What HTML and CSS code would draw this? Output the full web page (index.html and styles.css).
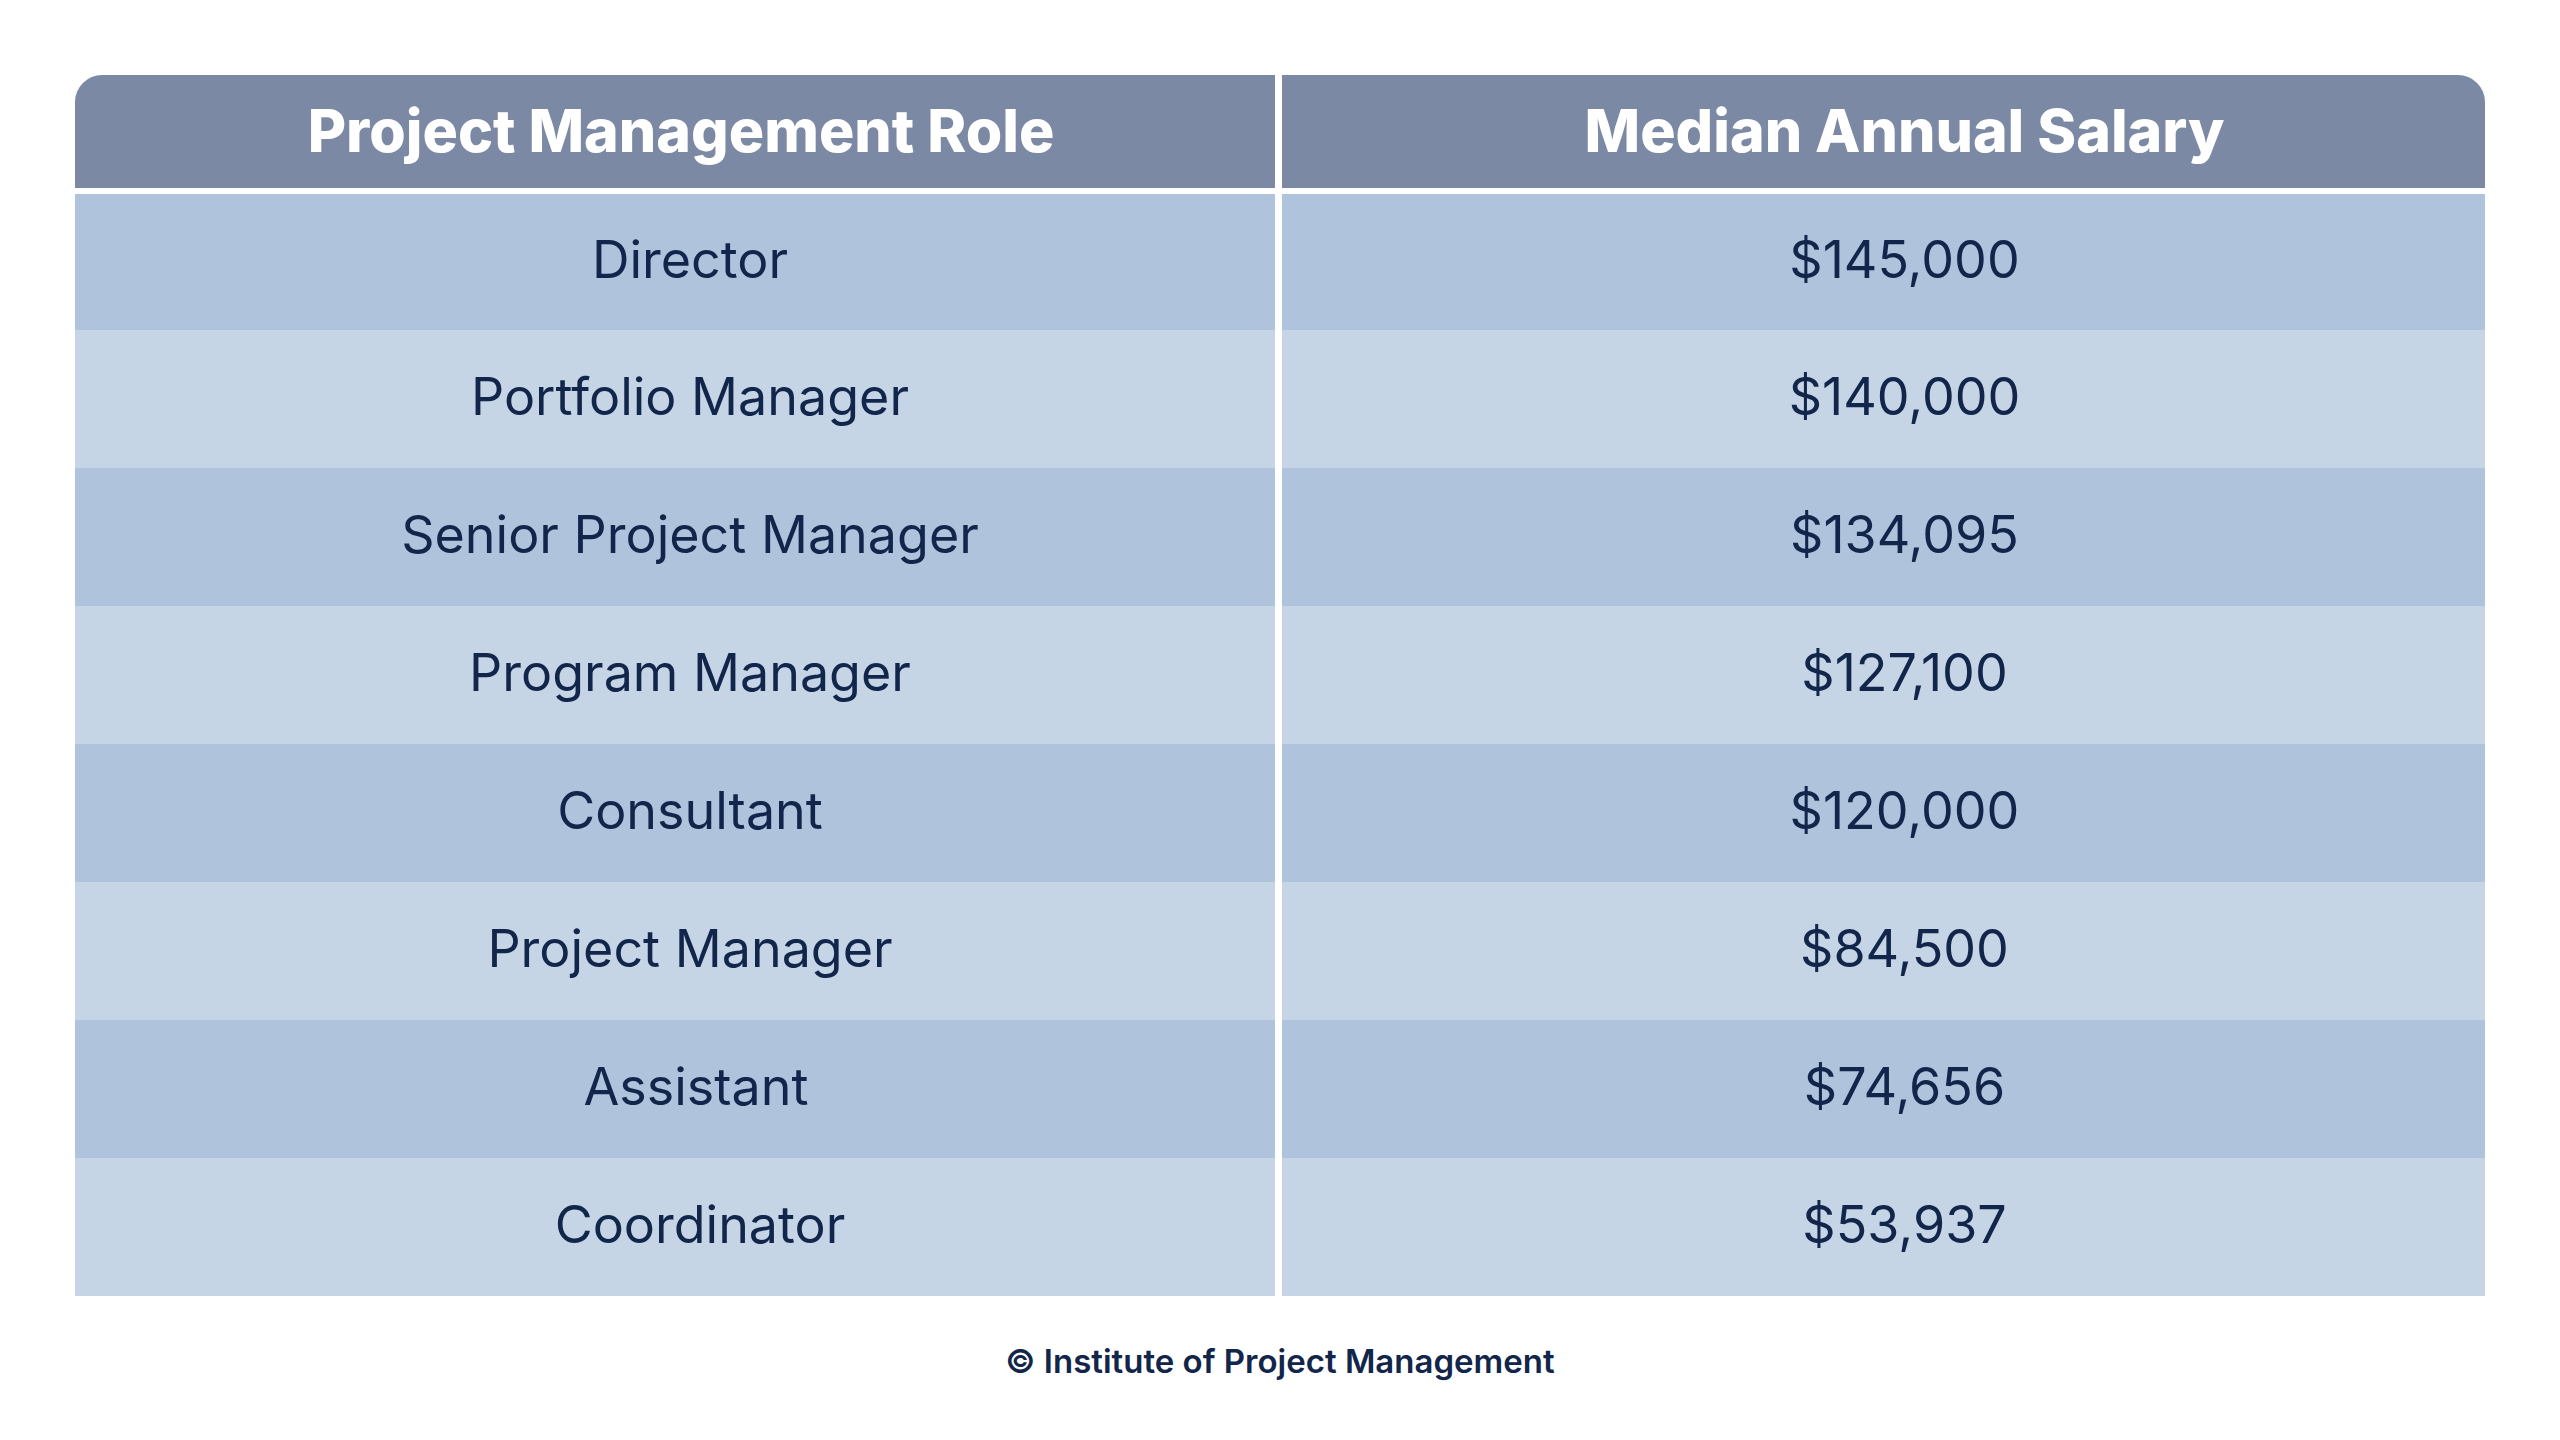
FILE: index.html
```html
<!DOCTYPE html>
<html lang="en">
<head>
<meta charset="utf-8">
<title>Project Management Salaries</title>
<link rel="stylesheet" href="styles.css">
</head>
<body>
<main class="page">
  <section class="table">
    <div class="thead">
      <div class="th th-left"><span class="cell-text head-role">Project Management Role</span></div>
      <div class="th th-right"><span class="cell-text salary">Median Annual Salary</span></div>
    </div>
    <div class="tbody">
      <div class="tr dark"><div class="td"><span class="cell-text role">Director</span></div><div class="td"><span class="cell-text salary">$145,000</span></div></div>
      <div class="tr light"><div class="td"><span class="cell-text role">Portfolio Manager</span></div><div class="td"><span class="cell-text salary">$140,000</span></div></div>
      <div class="tr dark"><div class="td"><span class="cell-text role">Senior Project Manager</span></div><div class="td"><span class="cell-text salary">$134,095</span></div></div>
      <div class="tr light"><div class="td"><span class="cell-text role">Program Manager</span></div><div class="td"><span class="cell-text salary">$127,100</span></div></div>
      <div class="tr dark"><div class="td"><span class="cell-text role">Consultant</span></div><div class="td"><span class="cell-text salary">$120,000</span></div></div>
      <div class="tr light"><div class="td"><span class="cell-text role">Project Manager</span></div><div class="td"><span class="cell-text salary">$84,500</span></div></div>
      <div class="tr dark"><div class="td"><span class="cell-text role shifted">Assistant</span></div><div class="td"><span class="cell-text salary">$74,656</span></div></div>
      <div class="tr light"><div class="td"><span class="cell-text role shifted-more">Coordinator</span></div><div class="td"><span class="cell-text salary">$53,937</span></div></div>
    </div>
  </section>
  <footer class="credit">© Institute of Project Management</footer>
</main>
</body>
</html>
```

FILE: styles.css
```css
html, body {
  margin: 0;
  padding: 0;
  background: #ffffff;
}

body {
  width: 2560px;
  height: 1440px;
  font-family: "Inter", "Liberation Sans", sans-serif;
  color: #12254a;
}

.page {
  padding: 75px 75px 0 75px;
  display: flex;
  flex-direction: column;
  align-items: center;
}

.table {
  width: 2410px;
  display: flex;
  flex-direction: column;
  gap: 6px;
}

.thead,
.tr {
  display: grid;
  grid-template-columns: 1200px 1203px;
  column-gap: 7px;
}

.th {
  height: 113px;
  background: #7b89a4;
  color: #ffffff;
  font-weight: 800;
  font-size: 59px;
  display: flex;
  align-items: center;
  justify-content: center;
  padding-bottom: 2px;
  box-sizing: border-box;
}

.th-left {
  border-top-left-radius: 27px;
}

.th-right {
  border-top-right-radius: 27px;
}

.tbody {
  display: flex;
  flex-direction: column;
}

.tr {
  height: 138px;
}

.tr:first-child {
  height: 136px;
}

.td {
  display: flex;
  align-items: center;
  justify-content: center;
  font-size: 52px;
  font-weight: 400;
  padding-bottom: 5px;
  box-sizing: border-box;
}

.tr.dark .td {
  background: #afc4dc;
}

.tr.light .td {
  background: #c5d5e6;
}

.cell-text.head-role {
  padding-left: 12px;
}

.cell-text.role {
  padding-left: 30px;
}

.cell-text.role.shifted {
  padding-left: 42px;
}

.cell-text.role.shifted-more {
  padding-left: 50px;
}

.cell-text.salary {
  padding-left: 42px;
}

.credit {
  margin-top: 46px;
  font-size: 33px;
  font-weight: 600;
  line-height: 1.2;
  color: #12254a;
  text-align: center;
}
```
